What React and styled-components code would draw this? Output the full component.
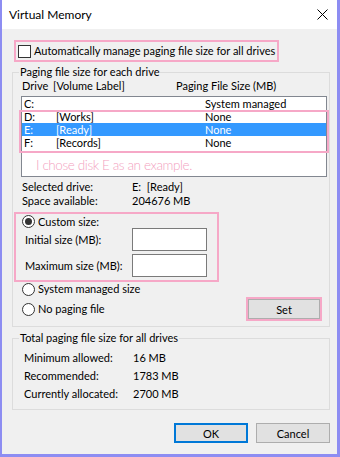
import React from 'react'
import styled, { createGlobalStyle } from 'styled-components'

const FONT = `Lato, "Liberation Sans", sans-serif`
const PINK = '#f6a8c7'

const GlobalStyle = createGlobalStyle`
body {
  margin: 0;
  font-family: ${FONT};
  font-size: 11px;
  color: #000;
  background: #fff;
}
* { box-sizing: border-box; }
`

const Window = styled.div`
width: 340px;
height: 457px;
border-style: solid;
border-color: #8d8df2;
border-width: 0 3px 3px 2px;
background: #f0f0f0;
display: flex;
flex-direction: column;
`

const TitleBar = styled.div`
height: 29px;
background: #fff;
display: flex;
align-items: center;
justify-content: space-between;
padding: 0 9px 0 7px;
font-size: 12px;
`

const Body = styled.div`
flex: 1;
display: flex;
flex-direction: column;
padding: 11px 7px 0 10px;
`

const Highlight = styled.div`
border: 2px solid ${PINK};
display: flex;
flex-direction: ${p => p.$column ? 'column' : 'row'};
align-items: ${p => p.$column ? 'stretch' : 'center'};
align-self: flex-start;
`

const TopCheck = styled(Highlight)`
margin-left: 2px;
padding: 2px 2px 2px 2px;
height: 22px;
`

const Checkbox = styled.span`
width: 13px;
height: 13px;
border: 1px solid #333;
background: #fff;
flex: none;
`

const Label = styled.span`
margin-left: ${p => p.$gap || 3}px;
line-height: 14px;
white-space: nowrap;
`

const Group = styled.fieldset`
margin: ${p => p.$top || 0}px 0 0 0;
padding: 0 2px ${p => p.$bottom || 0}px 8px;
border: 1px solid #dcdcdc;
min-width: 0;
display: flex;
flex-direction: column;
`

const Legend = styled.legend`
padding: 0 1px;
margin-left: -2px;
line-height: 14px;
height: 14px;
`

const ColumnHeader = styled.div`
display: grid;
grid-template-columns: 31px 123px 1fr;
padding-left: 1px;
line-height: 14px;
`

const ListBox = styled.div`
margin-top: 3px;
height: 81px;
border: 1px solid #828790;
background: #fff;
`

const DriveRow = styled.div`
display: grid;
grid-template-columns: 32px 149px 1fr;
padding-left: 2px;
height: 13px;
line-height: 13px;
background: ${p => p.$selected ? '#3399ff' : 'transparent'};
color: ${p => p.$selected ? '#fff' : '#000'};
`

const Marked = styled.div`
position: relative;
`

const MarkFrame = styled.div`
position: absolute;
top: 0;
bottom: -4px;
left: -3px;
right: -3px;
border: 2px solid ${PINK};
pointer-events: none;
`

const Note = styled.div`
padding: 7px 0 0 14px;
font-size: 13.5px;
letter-spacing: -0.4px;
font-weight: 300;
line-height: 18px;
color: #f39fc0;
white-space: nowrap;
`

const InfoBlock = styled.div`
margin-top: ${p => p.$top || 0}px;
padding-left: ${p => p.$indent || 0}px;
display: flex;
flex-direction: column;
`

const InfoRow = styled.div`
display: grid;
grid-template-columns: ${p => p.$col}px 1fr;
height: ${p => p.$h}px;
line-height: ${p => p.$h}px;
white-space: nowrap;
`

const CustomBox = styled(Highlight)`
margin: 4px 0 0 -7px;
width: 205px;
padding: 1px 0 3px 6px;
`

const RadioRow = styled.div`
display: flex;
align-items: center;
height: ${p => p.$h || 14}px;
margin-top: ${p => p.$top || 0}px;
padding-left: ${p => p.$indent || 0}px;
`

const Radio = styled.span`
width: 13px;
height: 13px;
border-radius: 50%;
border: 1px solid #333;
background: #fff;
flex: none;
display: flex;
align-items: center;
justify-content: center;
&::after {
  content: '';
  width: 7px;
  height: 7px;
  border-radius: 50%;
  background: #333;
  display: ${p => p.$checked ? 'block' : 'none'};
}
`

const SizeRow = styled.div`
display: flex;
align-items: center;
padding-left: 3px;
margin-top: ${p => p.$top || 0}px;
`

const SizeLabel = styled.span`
width: 107px;
line-height: 14px;
`

const TextInput = styled.div`
width: 75px;
height: 23px;
border: 1px solid #7a7a7a;
background: #fff;
`

const Spacer = styled.div`
flex: 1;
`

const SetFrame = styled.div`
border: 2px solid ${PINK};
margin-right: 5px;
`

const Button = styled.div`
width: ${p => p.$w}px;
height: ${p => p.$h}px;
display: flex;
align-items: center;
justify-content: center;
background: #e1e1e1;
border: ${p => p.$default ? '2px solid #0078d7' : '1px solid #adadad'};
`

const Footer = styled.div`
display: flex;
justify-content: flex-end;
gap: 8px;
margin-top: 13px;
`

const drives = [
  { d: 'C:', label: '', size: 'System managed' },
  { d: 'D:', label: '[Works]', size: 'None' },
  { d: 'E:', label: '[Ready]', size: 'None', selected: true },
  { d: 'F:', label: '[Records]', size: 'None' },
]

const CloseIcon = () => (
  <svg width="11" height="11" viewBox="0 0 11 11">
    <path d="M0.5 0.5 L10.5 10.5 M10.5 0.5 L0.5 10.5" stroke="#000" strokeWidth="1" fill="none" />
  </svg>
)

const Drive = ({ row }) => (
  <DriveRow $selected={row.selected}>
    <span>{row.d}</span>
    <span>{row.label}</span>
    <span>{row.size}</span>
  </DriveRow>
)

export default function App() {
  return (
    <>
      <GlobalStyle />
      <Window>
        <TitleBar>
          <span>Virtual Memory</span>
          <CloseIcon />
        </TitleBar>
        <Body>
          <TopCheck>
            <Checkbox />
            <Label>Automatically manage paging file size for all drives</Label>
          </TopCheck>

          <Group $top={3} $bottom={5}>
            <Legend>Paging file size for each drive</Legend>
            <ColumnHeader>
              <span>Drive</span>
              <span>[Volume Label]</span>
              <span>Paging File Size (MB)</span>
            </ColumnHeader>
            <ListBox>
              <Drive row={drives[0]} />
              <Marked>
                {drives.slice(1).map(r => <Drive key={r.d} row={r} />)}
                <MarkFrame />
              </Marked>
              <Note>I chose disk E as an example.</Note>
            </ListBox>

            <InfoBlock $top={3} $indent={1}>
              <InfoRow $col={110} $h={14}><span>Selected drive:</span><span>E:&nbsp;&nbsp;[Ready]</span></InfoRow>
              <InfoRow $col={110} $h={14}><span>Space available:</span><span>204676 MB</span></InfoRow>
            </InfoBlock>

            <CustomBox $column>
              <RadioRow $h={13}>
                <Radio $checked />
                <Label>Custom size:</Label>
              </RadioRow>
              <SizeRow>
                <SizeLabel>Initial size (MB):</SizeLabel>
                <TextInput />
              </SizeRow>
              <SizeRow $top={3}>
                <SizeLabel>Maximum size (MB):</SizeLabel>
                <TextInput />
              </SizeRow>
            </CustomBox>

            <RadioRow $indent={1}>
              <Radio />
              <Label>System managed size</Label>
            </RadioRow>
            <RadioRow $indent={1} $h={24} $top={1}>
              <Radio />
              <Label>No paging file</Label>
              <Spacer />
              <SetFrame>
                <Button $w={72} $h={20}>Set</Button>
              </SetFrame>
            </RadioRow>
          </Group>

          <Group $top={4} $bottom={6}>
            <Legend>Total paging file size for all drives</Legend>
            <InfoBlock $top={4} $indent={3}>
              <InfoRow $col={109} $h={18}><span>Minimum allowed:</span><span>16 MB</span></InfoRow>
              <InfoRow $col={109} $h={18}><span>Recommended:</span><span>1783 MB</span></InfoRow>
              <InfoRow $col={109} $h={18}><span>Currently allocated:</span><span>2700 MB</span></InfoRow>
            </InfoBlock>
          </Group>

          <Footer>
            <Button $w={74} $h={20} $default>OK</Button>
            <Button $w={74} $h={20}>Cancel</Button>
          </Footer>
        </Body>
      </Window>
    </>
  )
}
